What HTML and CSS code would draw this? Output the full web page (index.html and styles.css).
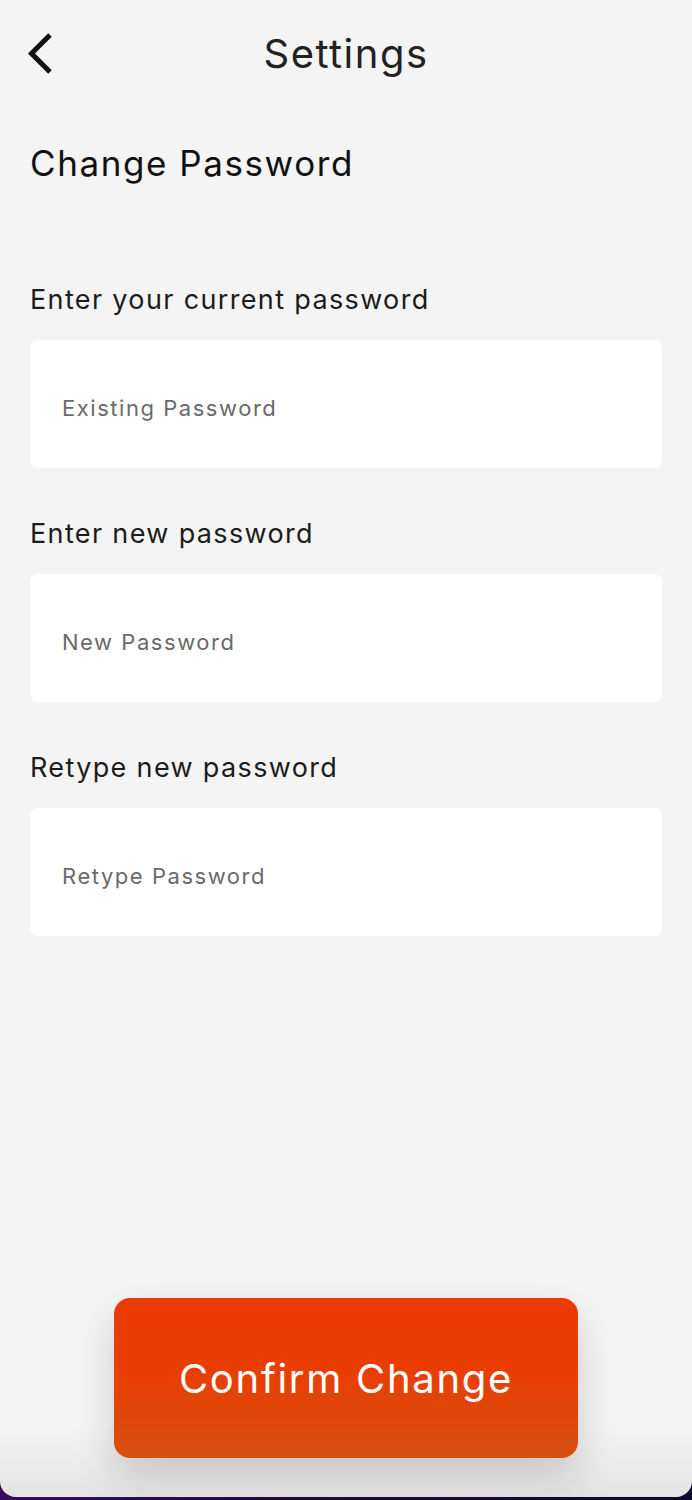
FILE: index.html
```html
<!DOCTYPE html>
<html lang="en">
<head>
<meta charset="utf-8">
<title>Settings</title>
<link rel="stylesheet" href="styles.css">
</head>
<body>
<div class="screen">
  <header class="topbar">
    <button class="back" aria-label="Back">
      <svg width="30" height="44" viewBox="0 0 30 44"><path d="M24 3 L5.5 21.5 L24 40" fill="none" stroke="#111" stroke-width="5" stroke-linejoin="miter"/></svg>
    </button>
    <h1 class="title">Settings</h1>
    <span class="spacer"></span>
  </header>
  <main class="content">
    <h2 class="heading">Change Password</h2>
    <form class="form">
      <label class="field">
        <span class="label">Enter your current password</span>
        <input class="input" type="password" placeholder="Existing Password">
      </label>
      <label class="field">
        <span class="label">Enter new password</span>
        <input class="input" type="password" placeholder="New Password">
      </label>
      <label class="field">
        <span class="label">Retype new password</span>
        <input class="input" type="password" placeholder="Retype Password">
      </label>
    </form>
  </main>
  <div class="actions">
    <button class="confirm" type="button">Confirm Change</button>
  </div>
</div>
</body>
</html>
```
FILE: styles.css
```css
* { box-sizing: border-box; }
html, body { margin: 0; padding: 0; }
body {
  width: 692px;
  height: 1500px;
  background: linear-gradient(90deg, #3b0c5e 0%, #1a0b3a 50%, #0e0b2c 100%);
  font-family: Inter, "DejaVu Sans", sans-serif;
  overflow: hidden;
}
.screen {
  position: relative;
  height: 1497px;
  background: #f4f4f4;
  border-radius: 0 0 16px 16px;
  display: flex;
  flex-direction: column;
  overflow: hidden;
}
.screen::after {
  content: "";
  position: absolute;
  left: 0; right: 0; bottom: 0;
  height: 70px;
  background: linear-gradient(180deg, rgba(0,0,0,0) 0%, rgba(0,0,0,0.07) 100%);
  pointer-events: none;
}
.topbar {
  height: 108px;
  display: grid;
  grid-template-columns: 80px 1fr 80px;
  align-items: center;
}
.back {
  border: 0;
  background: none;
  padding: 0;
  margin-left: 26px;
  width: 30px;
  height: 44px;
  display: flex;
}
.title {
  margin: 0;
  text-align: center;
  font-size: 40px;
  font-weight: 400;
  letter-spacing: 0.037em;
  color: #222;
  line-height: 48px;
}
.content {
  padding: 0 30px;
}
.heading {
  margin: 35px 0 0;
  font-size: 35px;
  line-height: 40px;
  font-weight: 400;
  letter-spacing: 0.045em;
  color: #111;
}
.form {
  margin-top: 100px;
  display: flex;
  flex-direction: column;
  gap: 49px;
}
.field {
  display: flex;
  flex-direction: column;
  gap: 23px;
}
.label {
  font-size: 27px;
  line-height: 34px;
  letter-spacing: 0.05em;
  color: #1c1c1c;
}
.input {
  height: 128px;
  border: 0;
  border-radius: 8px;
  background: #fff;
  padding: 8px 32px 0;
  font-family: inherit;
  font-size: 22px;
  letter-spacing: 0.07em;
  color: #333;
  outline: none;
}
.input::placeholder { color: #6a6a6a; }
.actions {
  margin-top: auto;
  margin-bottom: 39px;
  display: flex;
  justify-content: center;
  position: relative;
  z-index: 1;
}
.confirm {
  width: 464px;
  height: 160px;
  border: 0;
  border-radius: 16px;
  background: linear-gradient(180deg, #ec3b02 0%, #ea3d03 45%, #d65010 100%);
  color: #fff;
  font-family: inherit;
  font-size: 40px;
  font-weight: 400;
  letter-spacing: 0.043em;
  box-shadow: 0 18px 40px rgba(0,0,0,0.16);
}
```
